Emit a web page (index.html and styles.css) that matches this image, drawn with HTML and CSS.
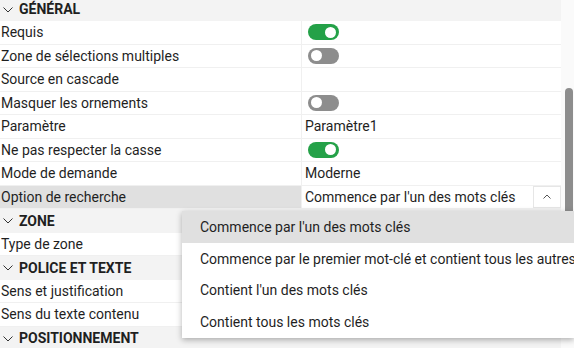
FILE: index.html
```html
<!DOCTYPE html>
<html lang="fr">
<head>
    <meta charset="UTF-8">
    <meta name="viewport" content="width=device-width, initial-scale=1.0">
    <title>Propriétés</title>
    <link rel="stylesheet" href="styles.css">
</head>
<body>
    <div class="panel">
        <div class="props">
            <div class="section">
                <svg class="chev" viewBox="0 0 10 6" width="10" height="6"><polyline points="0.5,0.5 5,5 9.5,0.5" fill="none" stroke="#333" stroke-width="1"/></svg>
                <span>GÉNÉRAL</span>
            </div>
            <div class="row">
                <div class="label">Requis</div>
                <div class="value"><span class="toggle on"></span></div>
            </div>
            <div class="row">
                <div class="label">Zone de sélections multiples</div>
                <div class="value"><span class="toggle"></span></div>
            </div>
            <div class="row">
                <div class="label">Source en cascade</div>
                <div class="value"></div>
            </div>
            <div class="row">
                <div class="label">Masquer les ornements</div>
                <div class="value"><span class="toggle"></span></div>
            </div>
            <div class="row">
                <div class="label">Paramètre</div>
                <div class="value">Paramètre1</div>
            </div>
            <div class="row">
                <div class="label">Ne pas respecter la casse</div>
                <div class="value"><span class="toggle on"></span></div>
            </div>
            <div class="row">
                <div class="label">Mode de demande</div>
                <div class="value">Moderne</div>
            </div>
            <div class="row active">
                <div class="label">Option de recherche</div>
                <div class="value select">
                    <span>Commence par l'un des mots clés</span>
                    <button class="caret" type="button">
                        <svg viewBox="0 0 8 5" width="8" height="5"><polyline points="0.5,4.5 4,1 7.5,4.5" fill="none" stroke="#555" stroke-width="1"/></svg>
                    </button>
                </div>
            </div>
            <div class="section">
                <svg class="chev" viewBox="0 0 10 6" width="10" height="6"><polyline points="0.5,0.5 5,5 9.5,0.5" fill="none" stroke="#333" stroke-width="1"/></svg>
                <span>ZONE</span>
            </div>
            <div class="row">
                <div class="label">Type de zone</div>
                <div class="value"></div>
            </div>
            <div class="section">
                <svg class="chev" viewBox="0 0 10 6" width="10" height="6"><polyline points="0.5,0.5 5,5 9.5,0.5" fill="none" stroke="#333" stroke-width="1"/></svg>
                <span>POLICE ET TEXTE</span>
            </div>
            <div class="row">
                <div class="label">Sens et justification</div>
                <div class="value"></div>
            </div>
            <div class="row">
                <div class="label">Sens du texte contenu</div>
                <div class="value"></div>
            </div>
            <div class="section">
                <svg class="chev" viewBox="0 0 10 6" width="10" height="6"><polyline points="0.5,0.5 5,5 9.5,0.5" fill="none" stroke="#333" stroke-width="1"/></svg>
                <span>POSITIONNEMENT</span>
            </div>
        </div>
        <div class="scrollbar"><div class="thumb"></div></div>

        <ul class="menu">
            <li class="selected">Commence par l'un des mots clés</li>
            <li>Commence par le premier mot-clé et contient tous les autres</li>
            <li>Contient l'un des mots clés</li>
            <li>Contient tous les mots clés</li>
        </ul>
    </div>
</body>
</html>
```

FILE: styles.css
```css
body {
    margin: 0;
    font-family: Roboto, "Noto Sans", sans-serif;
    font-size: 14px;
    color: #1f1f1f;
    background: #fff;
    overflow: hidden;
}
.panel {
    position: relative;
    display: flex;
    margin-top: -2.5px;
    width: 574px;
}
.props {
    width: 561px;
}
.section {
    height: 23.5px;
    background: #f3f3f3;
    display: flex;
    align-items: center;
    gap: 6px;
    padding-left: 3px;
    font-weight: 700;
    box-sizing: border-box;
}
.chev {
    margin-top: 1px;
}
.row {
    height: 23.5px;
    display: grid;
    grid-template-columns: 301px 1fr;
    border-bottom: 1px solid #f0f0f0;
    box-sizing: border-box;
}
.label {
    padding-left: 1px;
    display: flex;
    align-items: center;
    white-space: nowrap;
}
.value {
    border-left: 1px solid #f0f0f0;
    padding-left: 3px;
    display: flex;
    align-items: center;
    background: #fff;
}
.row.active .label {
    background: #e0e0e0;
}
.select {
    justify-content: space-between;
}
.caret {
    width: 28px;
    height: 22px;
    border: 1px solid #e6e6e6;
    background: #fff;
    padding: 0;
    display: flex;
    align-items: center;
    justify-content: center;
}
.toggle {
    width: 31px;
    height: 16px;
    border-radius: 8px;
    background: #8d8d8d;
    position: relative;
    margin-left: 3px;
}
.toggle::after {
    content: "";
    position: absolute;
    top: 2.5px;
    left: 3px;
    width: 11px;
    height: 11px;
    border-radius: 50%;
    background: #fff;
}
.toggle.on {
    background: #24a148;
}
.toggle.on::after {
    left: 17px;
}
.scrollbar {
    width: 13px;
    background: #fafafa;
    padding-top: 90px;
    box-sizing: border-box;
}
.thumb {
    width: 8px;
    height: 125px;
    margin-left: 4px;
    background: #8d8d8d;
    border-radius: 4px 4px 0 0;
}
.menu {
    position: absolute;
    left: 182px;
    top: 213.5px;
    width: 392px;
    margin: 0;
    padding: 0;
    list-style: none;
    background: #fff;
    box-shadow: 0 2px 6px rgba(0, 0, 0, 0.3);
    overflow: hidden;
}
.menu li {
    height: 31.75px;
    padding-left: 18px;
    display: flex;
    align-items: center;
    white-space: nowrap;
}
.menu li.selected {
    background: #e0e0e0;
}
```
